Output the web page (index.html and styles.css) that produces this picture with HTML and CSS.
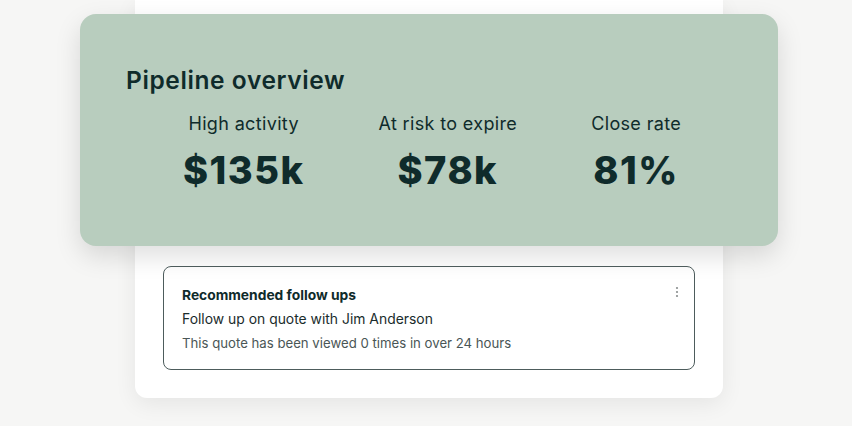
FILE: index.html
```html
<!DOCTYPE html>
<html lang="en">
<head>
<meta charset="utf-8">
<title>Pipeline overview</title>
<link rel="stylesheet" href="styles.css">
</head>
<body>
<main class="stage">
  <section class="sheet">
    <div class="overview">
      <h1 class="overview-title">Pipeline overview</h1>
      <div class="metrics">
        <div class="metric">
          <div class="metric-label">High activity</div>
          <div class="metric-value">$135k</div>
        </div>
        <div class="metric">
          <div class="metric-label">At risk to expire</div>
          <div class="metric-value">$78k</div>
        </div>
        <div class="metric">
          <div class="metric-label">Close rate</div>
          <div class="metric-value">81%</div>
        </div>
      </div>
    </div>
    <div class="followups">
      <div class="followups-head">
        <div class="followups-title">Recommended follow ups</div>
        <svg class="kebab" width="4" height="12" viewBox="0 0 4 12" aria-hidden="true">
          <circle cx="2" cy="2" r="1.1"/>
          <circle cx="2" cy="6" r="1.1"/>
          <circle cx="2" cy="10" r="1.1"/>
        </svg>
      </div>
      <div class="followups-item">Follow up on quote with Jim Anderson</div>
      <div class="followups-note">This quote has been viewed 0 times in over 24 hours</div>
    </div>
  </section>
</main>
</body>
</html>
```

FILE: styles.css
```css
* { box-sizing: border-box; }

html, body {
  margin: 0;
  padding: 0;
  background: #f6f6f5;
  width: 852px;
  height: 426px;
  overflow: hidden;
  font-family: Inter, "Noto Sans", sans-serif;
  color: #0f2b2b;
}

.stage {
  padding-left: 135px;
}

.sheet {
  width: 588px;
  background: #ffffff;
  border-radius: 0 0 12px 12px;
  box-shadow: 0 6px 22px rgba(0, 0, 0, 0.07);
  padding: 14px 28px 28px;
}

.overview {
  margin: 0 -83px;
  background: #b8cdbe;
  border-radius: 16px;
  box-shadow: 0 10px 26px rgba(0, 0, 0, 0.13);
  padding: 51px 46px 54px;
}

.overview-title {
  margin: 0;
  font-size: 24.5px;
  line-height: 30px;
  font-weight: 600;
  letter-spacing: 0.6px;
}

.metrics {
  margin-top: 18px;
  padding-left: 6px;
  display: flex;
  justify-content: center;
  gap: 74px;
}

.metric {
  display: flex;
  flex-direction: column;
  align-items: center;
}

.metric-label {
  font-size: 18px;
  line-height: 22px;
  font-weight: 400;
  letter-spacing: 0.35px;
}

.metric-value {
  margin-top: 13px;
  font-size: 38px;
  line-height: 44px;
  font-weight: 800;
  letter-spacing: 1.5px;
}

.followups {
  margin-top: 20px;
  border: 1.5px solid #4d5c5c;
  border-radius: 8px;
  padding: 15.5px 17px 14.5px 18px;
  font-size: 14px;
  line-height: 24px;
}

.followups-head {
  display: flex;
  justify-content: space-between;
  align-items: center;
}

.followups-title {
  font-weight: 700;
  font-size: 13.8px;
}

.kebab {
  fill: #8a8f8f;
  margin-right: -2px;
  margin-top: -6px;
}

.followups-item {
  color: #1a2c2c;
  font-size: 13.9px;
}

.followups-note {
  color: #4a5656;
  font-size: 13.2px;
}
```
